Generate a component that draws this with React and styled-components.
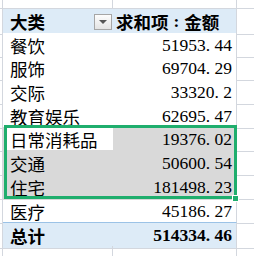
import React from 'react';
import styled, { createGlobalStyle, css } from 'styled-components';

const GRID = '#d3d7de';
const BLUE_LINE = '#9bc2e6';
const BLUE_FILL = '#ddebf7';
const GREEN = '#1fae6d';

const Global = createGlobalStyle`
  *, *::before, *::after { box-sizing: border-box; }
  body { margin: 0; background: #fff; }
`;

const Sheet = styled.div`
  width: 254px;
  height: 256px;
  overflow: hidden;
  background: #fff;
  font-family: "Liberation Serif", "Noto Sans CJK SC", serif;
  font-size: 17.5px;
  color: #000;
`;

const Row = styled.div`
  display: grid;
  grid-template-columns: 3px 110px 124px 17px;
  height: ${p => p.$h}px;
`;

const Gutter = styled.div`
  border-right: 1px solid ${GRID};
  border-bottom: 1px solid ${GRID};
`;

const Tail = styled.div`
  border-bottom: 1px solid ${GRID};
`;

const tones = {
  plain: '#fff',
  head: BLUE_FILL,
  total: BLUE_FILL,
  picked: '#d9d9d9',
  active: '#fff',
  blank: 'transparent',
};

const cellBase = css`
  display: flex;
  align-items: center;
  white-space: nowrap;
  background: ${p => tones[p.$tone || 'plain']};
  font-weight: ${p => (p.$tone === 'head' || p.$tone === 'total' ? 700 : 400)};
  ${p => (p.$tone === 'head') && css`border-bottom: 1px solid ${BLUE_LINE};`}
  ${p => (p.$tone === 'total') && css`
    border-top: 1px solid ${BLUE_LINE};
    border-bottom: 1px solid ${GRID};
  `}
  ${p => p.$tone === 'blank' && css`border-bottom: 1px solid ${GRID};`}
`;

const Label = styled.div`
  ${cellBase};
  justify-content: space-between;
  padding-left: 7px;
  ${p => p.$tone === 'blank' && css`border-right: 1px solid ${GRID};`}
  ${p => p.$tone === 'active' && css`
    background: linear-gradient(#fff, #fff) 4px 0 / calc(100% - 4px) calc(100% - 2px) no-repeat, #d9d9d9;
  `}
`;

const Value = styled.div`
  ${cellBase};
  justify-content: ${p => (p.$tone === 'head' ? 'flex-start' : 'flex-end')};
  padding: ${p => (p.$tone === 'head' ? '0 0 0 3px' : '0 4px 0 0')};
  border-right: 1px solid ${GRID};
`;

const FilterButton = styled.span`
  width: 18px;
  height: 16px;
  margin-right: 1px;
  margin-top: 1px;
  border: 1px solid #a6a6a6;
  background: linear-gradient(#fdfdfd, #e4e4e4);
  display: flex;
  align-items: center;
  justify-content: center;

  &::after {
    content: '';
    border-left: 4px solid transparent;
    border-right: 4px solid transparent;
    border-top: 4px solid #555;
  }
`;

const Colon = styled.span`
  margin: 0 5px;
`;

const Dot = styled.span`
  display: inline-block;
  width: 0.5em;
`;

const Selection = styled.div`
  position: relative;

  &::after {
    content: '';
    position: absolute;
    top: -2px;
    bottom: 0;
    left: 4px;
    right: 17px;
    border: 3px solid ${GREEN};
    pointer-events: none;
  }
`;

const FillHandle = styled.span`
  position: absolute;
  right: 15px;
  bottom: -3px;
  width: 7px;
  height: 7px;
  background: ${GREEN};
  border: 1px solid #fff;
  z-index: 1;
`;

const Amount = ({ value }) => {
  const [whole, frac] = value.split('.');
  return (
    <span>
      {whole}
      {frac !== undefined && <Dot>.</Dot>}
      {frac}
    </span>
  );
};

const before = [
  ['餐饮', '51953.44', 23],
  ['服饰', '69704.29', 24],
  ['交际', '33320.2', 24],
  ['教育娱乐', '62695.47', 23],
];

const picked = [
  ['日常消耗品', '19376.02', 24],
  ['交通', '50600.54', 24],
  ['住宅', '181498.23', 24],
];

const after = [['医疗', '45186.27', 23]];

const DataRow = ({ name, amount, h, tone, labelTone }) => (
  <Row $h={h}>
    <Gutter />
    <Label $tone={labelTone || tone}>{name}</Label>
    <Value $tone={tone}>
      <Amount value={amount} />
    </Value>
    <Tail />
  </Row>
);

export default function App() {
  return (
    <>
      <Global />
      <Sheet>
        <Row $h={9}>
          <Gutter />
          <Label $tone="blank" />
          <Value $tone="blank" />
          <Tail />
        </Row>

        <Row $h={24}>
          <Gutter />
          <Label $tone="head">
            大类
            <FilterButton />
          </Label>
          <Value $tone="head">
            求和项<Colon>:</Colon>金额
          </Value>
          <Tail />
        </Row>

        {before.map(([name, amount, h]) => (
          <DataRow key={name} name={name} amount={amount} h={h} tone="plain" />
        ))}

        <Selection>
          {picked.map(([name, amount, h], i) => (
            <DataRow
              key={name}
              name={name}
              amount={amount}
              h={h}
              tone="picked"
              labelTone={i === 0 ? 'active' : 'picked'}
            />
          ))}
          <FillHandle />
        </Selection>

        {after.map(([name, amount, h]) => (
          <DataRow key={name} name={name} amount={amount} h={h} tone="plain" />
        ))}

        <Row $h={24}>
          <Gutter />
          <Label $tone="total">总计</Label>
          <Value $tone="total">
            <Amount value="514334.46" />
          </Value>
          <Tail />
        </Row>

        <Row $h={12}>
          <Gutter />
          <Label $tone="blank" />
          <Value $tone="blank" />
          <Tail />
        </Row>
      </Sheet>
    </>
  );
}
